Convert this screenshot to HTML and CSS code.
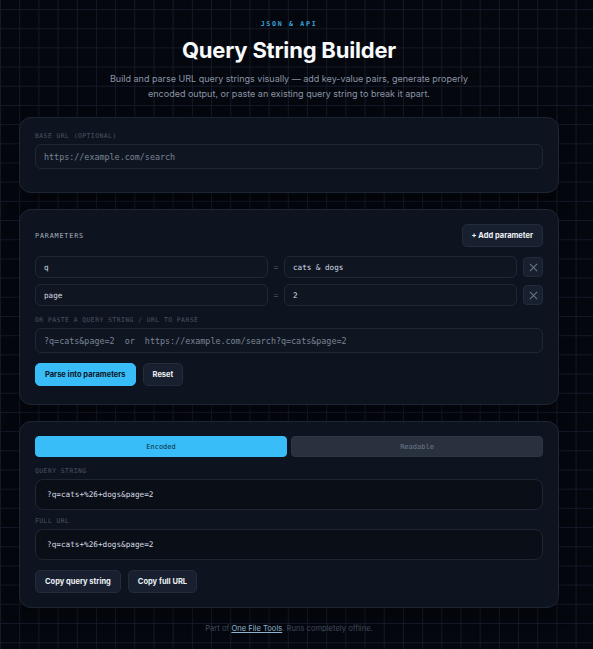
FILE: index.html
```html
<!DOCTYPE html>
<html lang="en">
<head>
    <meta charset="UTF-8">
    <meta name="viewport" content="width=device-width, initial-scale=1.0">
    <title>Query String Builder</title>
    <link rel="stylesheet" href="styles.css">
</head>
<body>
    <div class="container">
        <div class="header">
            <p class="eyebrow">JSON &amp; API</p>
            <h1>Query String Builder</h1>
            <p class="lead">Build and parse URL query strings visually — add key-value pairs, generate properly encoded output, or paste an existing query string to break it apart.</p>
        </div>

        <div class="card">
            <label class="label" for="baseUrl">Base URL (optional)</label>
            <input type="text" id="baseUrl" class="field" placeholder="https://example.com/search">
        </div>

        <div class="card params-card">
            <div class="card-head">
                <span class="label label-strong">Parameters</span>
                <button class="btn">+ Add parameter</button>
            </div>
            <div class="param-list">
                <div class="param-row">
                    <input type="text" class="field field-sm" value="q">
                    <span class="eq">=</span>
                    <input type="text" class="field field-sm" value="cats &amp; dogs">
                    <button class="btn-remove" title="Remove">
                        <svg width="9" height="9" viewBox="0 0 10 10"><path d="M1 1L9 9M9 1L1 9" stroke="currentColor" stroke-width="1.2" fill="none"/></svg>
                    </button>
                </div>
                <div class="param-row">
                    <input type="text" class="field field-sm" value="page">
                    <span class="eq">=</span>
                    <input type="text" class="field field-sm" value="2">
                    <button class="btn-remove" title="Remove">
                        <svg width="9" height="9" viewBox="0 0 10 10"><path d="M1 1L9 9M9 1L1 9" stroke="currentColor" stroke-width="1.2" fill="none"/></svg>
                    </button>
                </div>
            </div>
            <label class="label" for="pasteInput">Or paste a query string / URL to parse</label>
            <input type="text" id="pasteInput" class="field" placeholder="?q=cats&amp;page=2  or  https://example.com/search?q=cats&amp;page=2">
            <div class="actions">
                <button class="btn btn-primary">Parse into parameters</button>
                <button class="btn">Reset</button>
            </div>
        </div>

        <div class="card">
            <div class="tabs">
                <button class="tab active">Encoded</button>
                <button class="tab">Readable</button>
            </div>
            <span class="label">Query string</span>
            <div class="output">?q=cats+%26+dogs&amp;page=2</div>
            <span class="label">Full URL</span>
            <div class="output">?q=cats+%26+dogs&amp;page=2</div>
            <div class="actions">
                <button class="btn">Copy query string</button>
                <button class="btn">Copy full URL</button>
            </div>
        </div>

        <footer>
            <p>Part of <a href="#">One File Tools</a>. Runs completely offline.</p>
        </footer>
    </div>
</body>
</html>
```

FILE: styles.css
```css
* {
    margin: 0;
    padding: 0;
    box-sizing: border-box;
}
body {
    font-family: 'Inter', 'Noto Sans', sans-serif;
    background-color: #04070e;
    background-image:
        linear-gradient(to right, #131a28 1px, transparent 1px),
        linear-gradient(to bottom, #131a28 1px, transparent 1px);
    background-size: 19.2px 19.2px;
    background-position: 0 9px;
    color: #e5e9f0;
    min-height: 100vh;
    padding-right: 15px;
}
.container {
    max-width: 540px;
    margin: 0 auto;
    padding: 20px 0 12px;
}
.header {
    text-align: center;
    margin-bottom: 16px;
}
.eyebrow {
    font-family: 'DejaVu Sans Mono', monospace;
    font-size: 6.6px;
    letter-spacing: 1.7px;
    color: #3aa6df;
    font-weight: bold;
    margin-bottom: 7px;
}
.header h1 {
    font-size: 22px;
    font-weight: 700;
    color: #f8fafc;
    letter-spacing: -0.2px;
    line-height: 30px;
    margin-bottom: 6px;
}
.lead {
    font-size: 9px;
    line-height: 15px;
    color: #8b95a6;
    max-width: 365px;
    margin: 0 auto;
}
.card {
    background: #0e141f;
    border: 1px solid #1e2634;
    border-radius: 12px;
    padding: 14px 15px;
    margin-bottom: 16px;
    box-shadow: 0 6px 18px rgba(0, 0, 0, 0.35);
}
.label {
    display: block;
    font-family: 'DejaVu Sans Mono', monospace;
    font-size: 6.4px;
    letter-spacing: 0.45px;
    text-transform: uppercase;
    color: #4a5363;
    margin-bottom: 4px;
    line-height: 8px;
}
.label-strong {
    color: #a3acba;
    font-size: 6.8px;
    letter-spacing: 0.8px;
    margin-bottom: 0;
}
.field {
    display: block;
    width: 100%;
    height: 25px;
    padding: 0 8px;
    background: #0f1622;
    border: 1px solid #1f2836;
    border-radius: 6px;
    font-family: 'DejaVu Sans Mono', monospace;
    font-size: 8.4px;
    color: #d6dbe3;
    outline: none;
    margin-bottom: 9px;
}
.field::placeholder {
    color: #7b8494;
}
.card-head {
    display: flex;
    justify-content: space-between;
    align-items: center;
    margin-bottom: 9px;
}
.params-card {
    padding-bottom: 18px;
}
.params-card > .field {
    margin-bottom: 10px;
}
.param-list {
    display: flex;
    flex-direction: column;
    gap: 6px;
    margin-bottom: 10px;
}
.param-row {
    display: flex;
    align-items: center;
}
.param-row .field-sm {
    flex: 1;
    height: 22px;
    font-size: 7.6px;
    margin-bottom: 0;
}
.eq {
    width: 16px;
    text-align: center;
    font-family: 'DejaVu Sans Mono', monospace;
    font-size: 8px;
    color: #4a5363;
}
.btn-remove {
    width: 20px;
    height: 20px;
    margin-left: 6px;
    display: flex;
    align-items: center;
    justify-content: center;
    background: #182030;
    border: 1px solid #222b39;
    border-radius: 4px;
    color: #6b7585;
    cursor: pointer;
}
.btn {
    height: 23px;
    padding: 0 9px;
    background: #182030;
    border: 1px solid #232c3a;
    border-radius: 5px;
    font-family: 'Inter', 'Noto Sans', sans-serif;
    font-size: 7.5px;
    font-weight: 700;
    color: #eef1f5;
    cursor: pointer;
}
.btn-primary {
    background: #38bdf8;
    border-color: #38bdf8;
    color: #0b1626;
}
.actions {
    display: flex;
    gap: 7px;
}
.tabs {
    display: flex;
    gap: 4px;
    margin-bottom: 10px;
}
.tab {
    flex: 1;
    height: 21px;
    border: 1px solid #2d3645;
    border-radius: 4px;
    background: #29313f;
    color: #6f7988;
    font-family: 'DejaVu Sans Mono', monospace;
    font-size: 7px;
    cursor: pointer;
}
.tab.active {
    background: #38bdf8;
    border-color: #38bdf8;
    color: #0d2a3c;
}
.output {
    height: 31px;
    display: flex;
    align-items: center;
    padding: 0 11px;
    background: #0a0e17;
    border: 1px solid #1e2634;
    border-radius: 8px;
    font-family: 'DejaVu Sans Mono', monospace;
    font-size: 7.7px;
    color: #d4d9e1;
    margin-bottom: 7px;
}
.output + .actions {
    margin-top: 10px;
}
footer {
    text-align: center;
    font-size: 7.6px;
    line-height: 10px;
    color: #414a5a;
}
footer a {
    color: #8fb4cf;
    text-decoration: underline;
}
```
